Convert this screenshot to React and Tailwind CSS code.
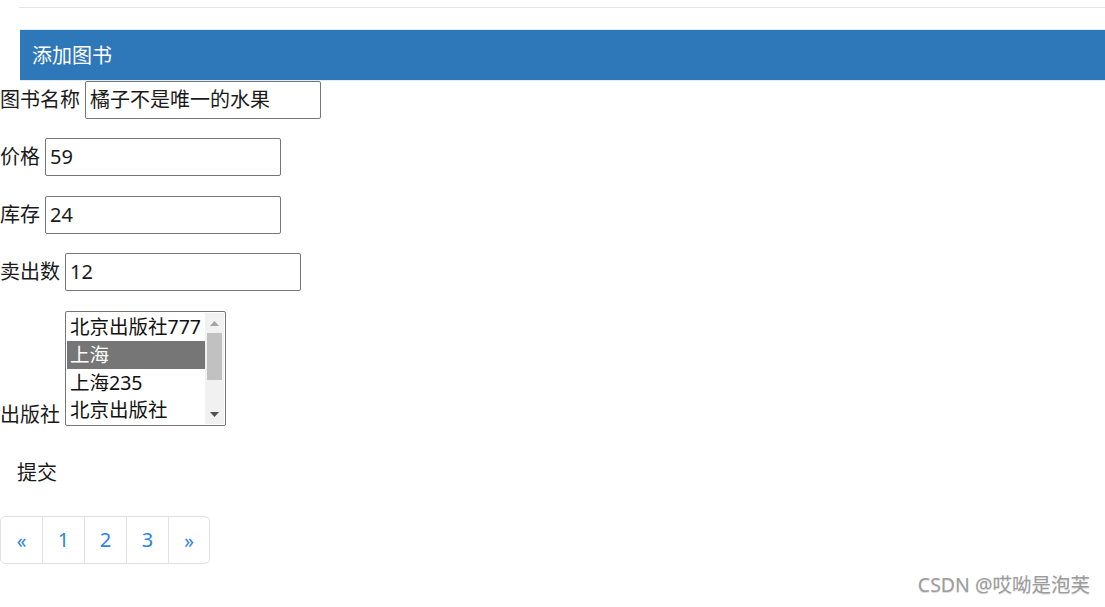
import React from 'react';

const publishers = ['北京出版社777', '上海', '上海235', '北京出版社'];

function Field({ label, value, className }) {
  return (
    <div className={`flex items-center h-[38px] ${className}`}>
      <span className="whitespace-nowrap">{label}</span>
      <div className="ml-[5px] w-[236px] h-[38px] border border-[#767676] rounded-[2px] flex items-center px-[4px] text-[20px]">
        {value}
      </div>
    </div>
  );
}

const pages = [
  { t: '«', w: 'w-[41px]' },
  { t: '1', w: 'w-[42px] border-l' },
  { t: '2', w: 'w-[42px] border-l' },
  { t: '3', w: 'w-[42px] border-l' },
  { t: '»', w: 'w-[41px] border-l' },
];

export default function App() {
  return (
    <div
      className="relative w-full h-[607px] bg-white text-[20px] text-[#1a1a1a] overflow-hidden"
      style={{ fontFamily: '"Noto Sans", "Noto Sans CJK SC", sans-serif' }}
    >
      <div className="ml-[19px] mt-[7px] h-px bg-[#e5e5e5]" />

      {/* panel heading */}
      <div className="ml-[20px] mt-[21px] border-t border-b border-[#e3ecf4]">
        <div className="h-[50px] bg-[#2e78ba] flex items-center pl-[12px] pt-[2px] text-white text-[20px]">
          添加图书
        </div>
      </div>

      {/* form */}
      <div className="flex flex-col leading-none">
        <Field label="图书名称" value="橘子不是唯一的水果" className="mt-0" />
        <Field label="价格" value="59" className="mt-[19px]" />
        <Field label="库存" value="24" className="mt-[20px]" />
        <Field label="卖出数" value="12" className="mt-[19px]" />

        <div className="flex items-end mt-[20px]">
          <span className="whitespace-nowrap pb-px">出版社</span>
          <div className="ml-[5px] w-[161px] h-[115px] border border-[#767676] rounded-[2px] flex p-px">
            <div className="flex-1 flex flex-col overflow-hidden">
              {publishers.map((p, i) => (
                <div
                  key={p + i}
                  className={`h-[28px] flex items-center pl-[3px] whitespace-nowrap text-[19.5px] ${
                    i === 1 ? 'bg-[#767676] text-white' : 'text-[#111]'
                  }`}
                >
                  {p}
                </div>
              ))}
            </div>
            <div className="w-[19px] bg-[#f1f1f1] flex flex-col items-center">
              <div className="h-[20px] flex items-center justify-center">
                <svg width="9" height="5" viewBox="0 0 9 5">
                  <polygon points="0,5 4.5,0 9,5" fill="#a3a3a3" />
                </svg>
              </div>
              <div className="w-[15px] h-[47px] bg-[#c1c1c1]" />
              <div className="flex-1" />
              <div className="h-[20px] flex items-center justify-center">
                <svg width="9" height="5" viewBox="0 0 9 5">
                  <polygon points="0,0 4.5,5 9,0" fill="#505050" />
                </svg>
              </div>
            </div>
          </div>
        </div>

        <div className="mt-[28px] h-[38px] flex items-center pl-[17px]">提交</div>

        {/* pagination */}
        <div className="mt-[24px] flex">
          <div className="flex border border-[#dee2e6] rounded-[5px] text-[#2a7ff5]">
            {pages.map(({ t, w }) => (
              <div
                key={t}
                className={`h-[46px] flex items-center justify-center border-[#dee2e6] ${w} ${
                  t === '«' || t === '»' ? 'text-[19px] pt-[2px]' : ''
                }`}
              >
                {t}
              </div>
            ))}
          </div>
        </div>
      </div>

      <div className="absolute right-[15px] bottom-[8px] text-[19.5px] text-[#9c9c9c] [text-shadow:0_1px_1px_rgba(0,0,0,0.15)]">
        CSDN @哎呦是泡芙
      </div>
    </div>
  );
}
